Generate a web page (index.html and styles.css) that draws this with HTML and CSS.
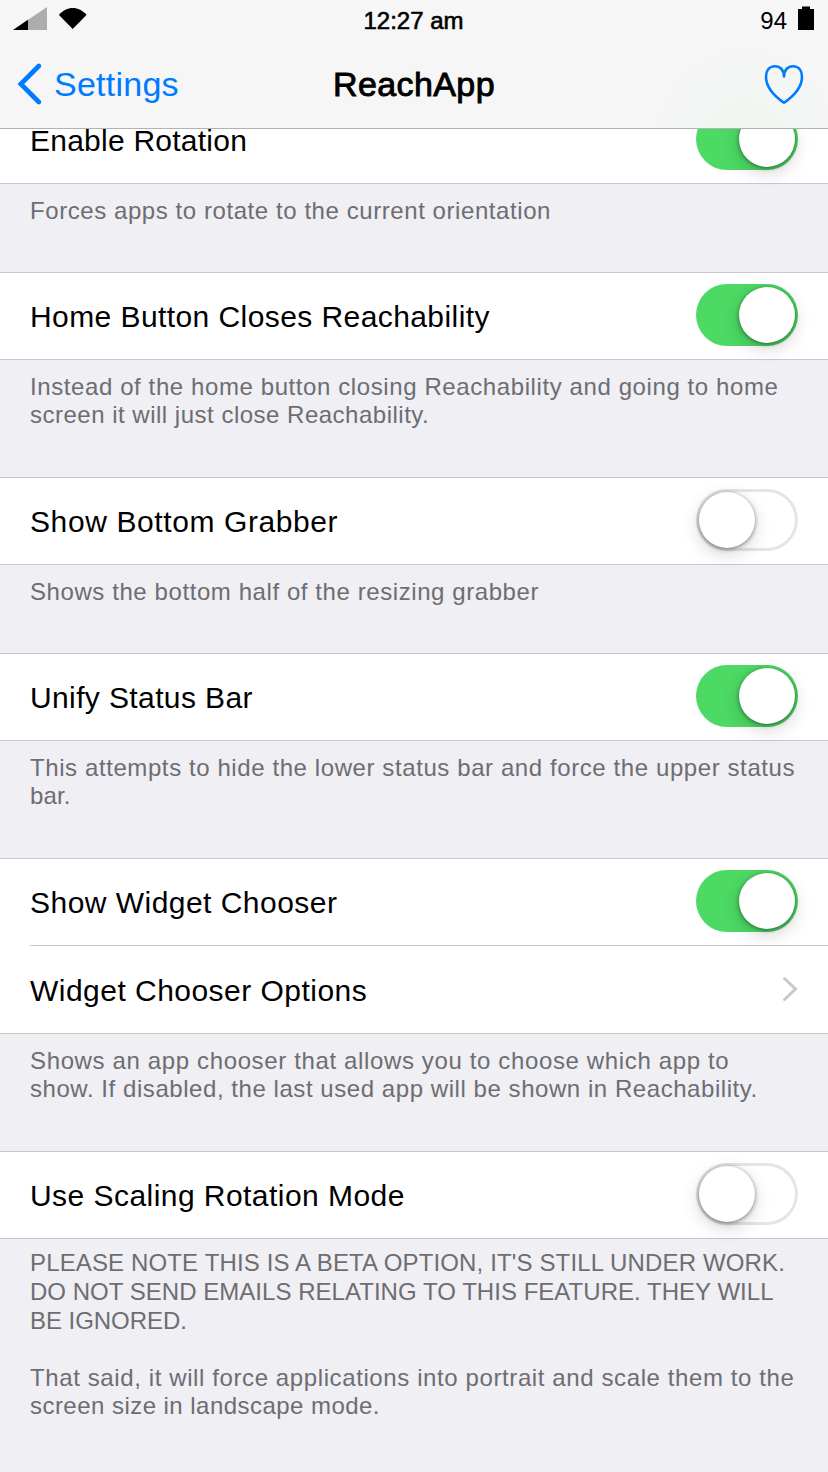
FILE: index.html
```html
<!DOCTYPE html>
<html lang="en">
<head>
<meta charset="utf-8">
<title>ReachApp</title>
<link rel="stylesheet" href="styles.css">
</head>
<body>
<header class="nav">
  <div class="status">
    <div class="status-left">
      <svg class="signal" width="36" height="23" viewBox="0 0 36 23"><path d="M0 23L34 0V23Z" fill="#adadad"/><path d="M0 23L15 12.850V23Z" fill="#000"/></svg>
      <svg class="wifi" width="28" height="22" viewBox="0 0 28 22"><path d="M0 7C7.500-2.300 20-2.300 27.500 7L13.700 21Z" fill="#000"/></svg>
    </div>
    <span class="time">12:27 am</span>
    <div class="status-right">
      <span class="percent">94</span>
      <svg class="battery" width="16" height="24" viewBox="0 0 16 24"><path d="M4 .5H12V3H16V24H0V3H4Z" fill="#000"/></svg>
    </div>
  </div>
  <div class="bar">
    <a class="back"><svg width="26" height="42" viewBox="0 0 26 42"><path d="M21.800 3L3.800 21L21.800 39" fill="none" stroke="#007aff" stroke-width="4.600" stroke-linecap="round"/></svg><span class="back-text">Settings</span></a>
    <h1 class="title">ReachApp</h1>
    <svg class="heart" width="40" height="42" viewBox="0 0 40 42"><path d="M20 12.500C20 6 16 2.200 11 2.200C5 2.200 2 7 2 13C2 22.500 9.500 31.500 20 38.800C30.500 31.500 38 22.500 38 13C38 7 35 2.200 29 2.200C24 2.200 20 6 20 12.500Z" fill="none" stroke="#007aff" stroke-width="2.600" stroke-linejoin="round"/></svg>
  </div>
</header>
<main class="list">
  <section class="cells"><div class="cell"><span class="label l-rotation">Enable Rotation</span><span class="switch on"><i class="knob"></i></span></div></section>
  <p class="note single"><span class="n1">Forces apps to rotate to the current orientation</span></p>
  <section class="cells"><div class="cell"><span class="label l-home">Home Button Closes Reachability</span><span class="switch on"><i class="knob"></i></span></div></section>
  <p class="note"><span class="n2">Instead of the home button closing Reachability and going to home</span><span class="n3">screen it will just close Reachability.</span></p>
  <section class="cells"><div class="cell"><span class="label l-grabber">Show Bottom Grabber</span><span class="switch"><i class="knob"></i></span></div></section>
  <p class="note single"><span class="n4">Shows the bottom half of the resizing grabber</span></p>
  <section class="cells"><div class="cell"><span class="label l-unify">Unify Status Bar</span><span class="switch on"><i class="knob"></i></span></div></section>
  <p class="note"><span class="n5">This attempts to hide the lower status bar and force the upper status</span><span class="n6">bar.</span></p>
  <section class="cells">
    <div class="cell"><span class="label l-widget">Show Widget Chooser</span><span class="switch on"><i class="knob"></i></span></div>
    <div class="cell inset"><span class="label l-options">Widget Chooser Options</span><svg class="chevron" width="16" height="26" viewBox="0 0 16 26"><path d="M2.500 2.500L13.500 13L2.500 23.500" fill="none" stroke="#c7c7cc" stroke-width="3" stroke-linecap="round"/></svg></div>
  </section>
  <p class="note"><span class="n7">Shows an app chooser that allows you to choose which app to</span><span class="n8">show. If disabled, the last used app will be shown in Reachability.</span></p>
  <section class="cells"><div class="cell"><span class="label l-scaling">Use Scaling Rotation Mode</span><span class="switch"><i class="knob"></i></span></div></section>
  <div class="note beta"><span class="n9">PLEASE NOTE THIS IS A BETA OPTION, IT'S STILL UNDER WORK.</span><span class="n10">DO NOT SEND EMAILS RELATING TO THIS FEATURE. THEY WILL</span><span class="n11">BE IGNORED.</span></div>
  <p class="note plain"><span class="n12">That said, it will force applications into portrait and scale them to the</span><span class="n13">screen size in landscape mode.</span></p>
</main>
</body>
</html>
```
FILE: styles.css
```css
* { box-sizing: border-box; }
body { margin: 0; width: 828px; height: 1472px; overflow: hidden; background: #efeff4; font-family: "Liberation Sans", Arial, sans-serif; color: #000; }
svg { display: block; flex: none; }

/* Fixed navigation bar above the scrolled list */
.nav { position: absolute; top: 0; left: 0; z-index: 2; width: 828px; height: 129px; background: radial-gradient(circle at 745px 140px, #f0f6f1 0, #f6f6f6 110px); border-bottom: 1px solid #b2b2b2; }
.status { display: grid; grid-template-columns: 1fr auto 1fr; height: 40px; padding: 0 14px 0 13px; font-size: 24px; line-height: 40px; }
.status-left { display: flex; align-items: flex-start; gap: 10px; padding-top: 7px; }
.wifi { margin-top: 1px; }
.time { -webkit-text-stroke: .6px #000; padding-top: 1px; }
.status-right { display: flex; justify-content: flex-end; gap: 11px; }
.percent { padding-top: 1px; }
.battery { margin-top: 6px; }
.bar { display: grid; grid-template-columns: 1fr auto 1fr; align-items: center; height: 88px; padding: 0 24px; }
.back { display: flex; align-items: center; gap: 11px; margin-left: -7px; color: #007aff; font-size: 34px; letter-spacing: .25px; }
.title { margin: 0; font-size: 34px; font-weight: 400; letter-spacing: .4px; -webkit-text-stroke: .9px #000; }
.heart { justify-self: end; margin-top: 2px; }

.list { padding-top: 96px; }
.cells { background: #fff; border-top: 1px solid #c8c7cc; border-bottom: 1px solid #c8c7cc; }
.cell { display: flex; align-items: center; justify-content: space-between; height: 86px; padding: 0 30px; }
.inset { height: 88px; padding-left: 0; margin-left: 30px; border-top: 1px solid #c8c7cc; }
.chevron { margin-bottom: 1px; }
.label { font-size: 30px; line-height: 40px; padding-top: 2px; white-space: nowrap; }

.switch { flex: none; width: 102px; height: 62px; padding: 3px; margin-bottom: 2px; border-radius: 31px; display: flex; box-shadow: inset 0 0 0 3px #e5e5e5; }
.on { background: #4cd964; box-shadow: none; justify-content: flex-end; }
.knob { width: 56px; height: 56px; border-radius: 50%; background: #fff; box-shadow: 0 1px 4px rgba(0,0,0,.45), 0 6px 18px rgba(0,0,0,.17); }

.note { margin: 0; padding: 13px 30px 48px; font-size: 24px; line-height: 28px; color: #6d6d72; white-space: nowrap; }
.note span { display: block; width: max-content; }
.single { padding-bottom: 47px; }
.beta { padding: 9px 30px 29px; line-height: 29px; }
.plain { padding-top: 0; }

/* Per-line tracking */
.l-rotation { letter-spacing: .24px; }
.l-home { letter-spacing: .42px; }
.l-grabber { letter-spacing: .6px; }
.l-unify { letter-spacing: .38px; }
.l-widget, .l-options { letter-spacing: .47px; }
.l-scaling { letter-spacing: .45px; }
.n1 { letter-spacing: .57px; }
.n2 { letter-spacing: .595px; }
.n3 { letter-spacing: .5px; }
.n4 { letter-spacing: .58px; }
.n5 { letter-spacing: .59px; }
.n6 { letter-spacing: .1px; }
.n7 { letter-spacing: .635px; }
.n8 { letter-spacing: .555px; }
.n9 { letter-spacing: .14px; }
.n10 { letter-spacing: .03px; }
.n11 { letter-spacing: -.05px; }
.n12 { letter-spacing: .605px; }
.n13 { letter-spacing: .46px; }
```
